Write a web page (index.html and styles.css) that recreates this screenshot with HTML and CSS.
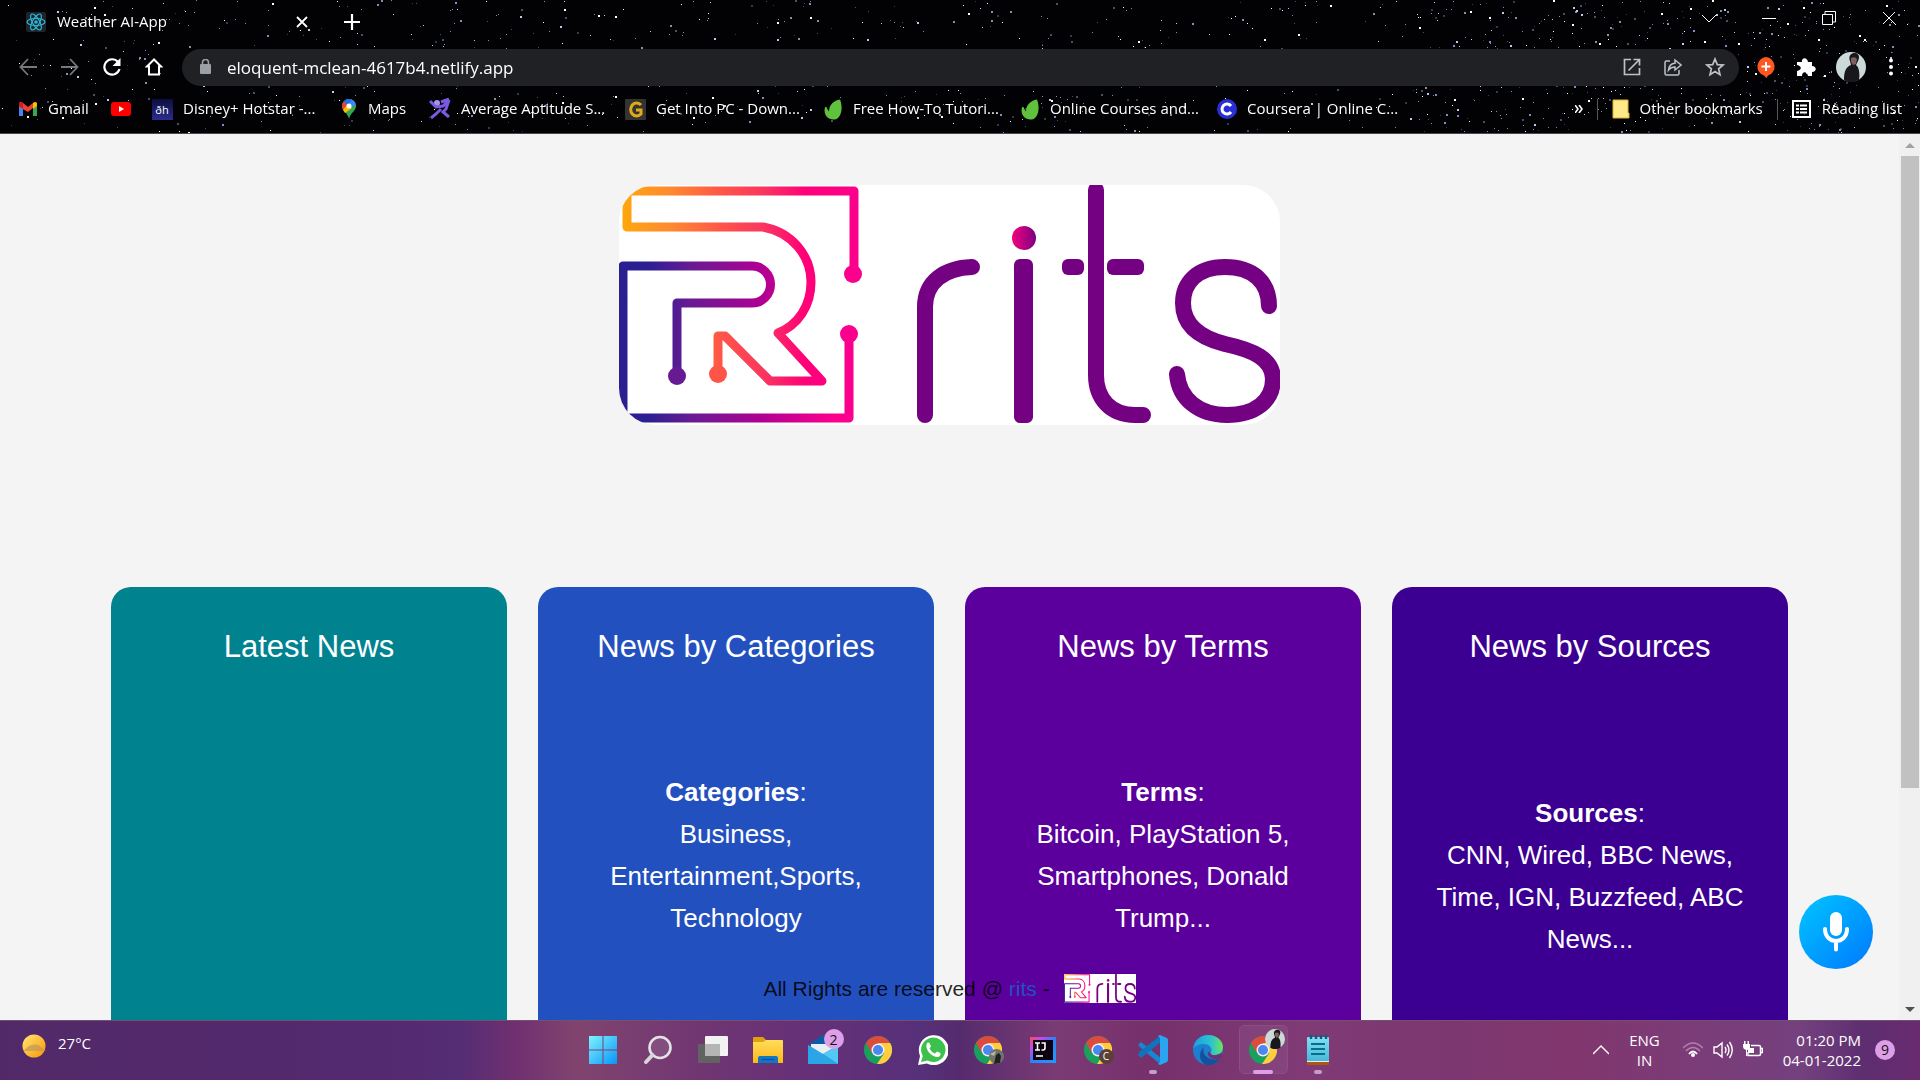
FILE: index.html
```
<!DOCTYPE html>
<html lang="en">
<head>
<meta charset="utf-8">
<title>Weather AI-App</title>
<link rel="stylesheet" href="styles.css">
</head>
<body>
<svg class="defs" width="0" height="0" aria-hidden="true">
  <defs>
    <linearGradient id="warm" gradientUnits="userSpaceOnUse" x1="4" y1="0" x2="238" y2="0">
      <stop offset="0" stop-color="#ffa60c"/><stop offset=".2" stop-color="#ff8a30"/><stop offset=".42" stop-color="#ff5548"/><stop offset=".6" stop-color="#f9365f"/><stop offset=".78" stop-color="#ff0078"/><stop offset="1" stop-color="#fb008c"/>
    </linearGradient>
    <linearGradient id="cool" gradientUnits="userSpaceOnUse" x1="0" y1="0" x2="238" y2="0">
      <stop offset="0" stop-color="#2a2090"/><stop offset=".12" stop-color="#2b1f92"/><stop offset=".3" stop-color="#671b93"/><stop offset=".6" stop-color="#b00093"/><stop offset=".9" stop-color="#fb008c"/>
    </linearGradient>
    <linearGradient id="dot"><stop offset="0" stop-color="#f5007e"/><stop offset="1" stop-color="#7a0082"/></linearGradient>
    <linearGradient id="win" x1="0" y1="0" x2="1" y2="1"><stop offset="0" stop-color="#7df3ff"/><stop offset="1" stop-color="#0a94f8"/></linearGradient>
    <linearGradient id="sun" x1="0" y1="0" x2="1" y2="1"><stop offset="0" stop-color="#ffe978"/><stop offset="1" stop-color="#fb9400"/></linearGradient>
    <linearGradient id="folder" x1="0" y1="0" x2="0" y2="1"><stop offset="0" stop-color="#ffdc5c"/><stop offset="1" stop-color="#fcb915"/></linearGradient>
    <linearGradient id="edge" x1="0" y1="0" x2="1" y2="0"><stop offset="0" stop-color="#1b9de2"/><stop offset=".6" stop-color="#2cc3d0"/><stop offset="1" stop-color="#6be45a"/></linearGradient>
    <linearGradient id="ij" x1="0" y1="0" x2="1" y2="1"><stop offset="0" stop-color="#fd4a5c"/><stop offset=".25" stop-color="#c04af0"/><stop offset=".5" stop-color="#2f80f5"/><stop offset="1" stop-color="#1f9bff"/></linearGradient>
    <linearGradient id="pad" x1="0" y1="0" x2="0" y2="1"><stop offset="0" stop-color="#83e0f5"/><stop offset="1" stop-color="#44b9da"/></linearGradient>
    <linearGradient id="hot" x1="0" y1="0" x2="0" y2="1"><stop offset="0" stop-color="#0b0f3c"/><stop offset="1" stop-color="#2c2d8e"/></linearGradient>
    <symbol id="rits" viewBox="0 0 661 240">
      <g fill="none" stroke="url(#warm)" stroke-width="9" stroke-linejoin="round">
        <path d="M235 89V6H8V42H144C172 47 192 70 192 97C192 121 179 140 159 148L203 196H151L106 151H99V189"/>
      </g>
      <g fill="none" stroke="url(#cool)" stroke-width="9" stroke-linejoin="round">
        <path d="M58 191V118H133A18 18 0 0 0 133 81H4V233H230V149"/>
      </g>
      <circle cx="234" cy="89" r="9" fill="#fb008c"/><circle cx="230" cy="149" r="9" fill="#fb008c"/>
      <circle cx="58" cy="191" r="9" fill="#671b93"/><circle cx="99" cy="189" r="9" fill="#ff5548"/>
      <g fill="none" stroke="#740082" stroke-width="16" stroke-linecap="round">
        <path d="M306 230V122C306 97 325 83 353 82"/>
        <path d="M477 5V190C477 214 492 230 516 230H524"/>
        <path d="M650 121C650 97 634 82 606 82C578 82 564 98 564 118C564 141 582 153 606 159C634 165 654 174 654 194C654 216 636 230 608 230C580 230 560 214 558 189"/>
      </g>
      <g fill="#740082"><rect x="395" y="74" width="19" height="164" rx="6"/><rect x="443" y="74" width="22" height="16" rx="6"/><rect x="488" y="74" width="37" height="16" rx="6"/></g>
      <circle cx="405" cy="53" r="12" fill="url(#dot)"/>
    </symbol>
    <symbol id="chrome" viewBox="0 0 28 28">
      <circle cx="14" cy="14" r="14" fill="#17a05e"/>
      <path d="M1.900 7A14 14 0 0 1 26.100 7H14L8 17.500Z" fill="#dd4b3e"/>
      <path d="M14 7H26.100A14 14 0 0 1 13 28L20 17.500Z" fill="#ffcd40"/>
      <circle cx="14" cy="14" r="6.500" fill="#f1f1f1"/><circle cx="14" cy="14" r="5" fill="#4a87f0"/>
    </symbol>
    <symbol id="person" viewBox="0 0 30 30">
      <circle cx="15" cy="15" r="15" fill="#cbd9d9"/>
      <path d="M8 28C8 19 10 15 15 13L14 9C12 4 15 1 19 1C23 1 24 5 22 9L20 13C23 15 24 21 23 28C18 31 12 31 8 28Z" fill="#17171c"/>
      <path d="M15 6Q19 4 21 7L20 12L17 13L15 10Z" fill="#80605a"/>
    </symbol>
    <symbol id="leaf" viewBox="0 0 20 20"><path d="M17 0C20 7 19 18 12 20C5 21 0 15 2 8C3 7 4 8 4 9L6 12C6 5 11 1 17 0Z" fill="#5fc13c"/></symbol>
  </defs>
</svg>

<header class="browser">
  <canvas class="stars" id="stars"></canvas>
  <div class="tabs">
    <div class="tab">
      <svg width="20" height="20" viewBox="0 0 20 20"><rect width="20" height="20" rx="2" fill="#20232a"/><g fill="none" stroke="#2ab8d8" stroke-width="1.200"><ellipse cx="10" cy="10" rx="9" ry="3.500"/><ellipse cx="10" cy="10" rx="9" ry="3.500" transform="rotate(60 10 10)"/><ellipse cx="10" cy="10" rx="9" ry="3.500" transform="rotate(120 10 10)"/></g><circle cx="10" cy="10" r="1.800" fill="#2ab8d8"/></svg>
      <span class="tab-title">Weather AI-App</span>
      <button class="icon-btn" aria-label="Close tab"><svg width="12" height="12" viewBox="0 0 12 12"><path d="M1 1L11 11M11 1L1 11" stroke="#fff" stroke-width="1.800"/></svg></button>
    </div>
    <button class="icon-btn" aria-label="New tab"><svg width="16" height="16" viewBox="0 0 16 16"><path d="M8 0V16M0 8H16" stroke="#fff" stroke-width="2.200"/></svg></button>
    <div class="window-controls">
      <button class="icon-btn" aria-label="Search tabs"><svg width="14" height="14" viewBox="0 0 14 14"><path d="M0 4L7 11L14 4" fill="none" stroke="#fff"/></svg></button>
      <button class="icon-btn" aria-label="Minimize"><svg width="14" height="14" viewBox="0 0 14 14"><path d="M0 7.500H14" stroke="#fff"/></svg></button>
      <button class="icon-btn" aria-label="Restore"><svg width="14" height="14" viewBox="0 0 14 14"><path d="M.500 3.500H10.500V13.500H.500ZM3 3V.500H13.500V11H11" fill="none" stroke="#fff"/></svg></button>
      <button class="icon-btn" aria-label="Close"><svg width="14" height="14" viewBox="0 0 14 14"><path d="M1 1L13 13M13 1L1 13" stroke="#fff"/></svg></button>
    </div>
  </div>
  <div class="toolbar">
    <div class="nav">
      <button class="icon-btn" aria-label="Back"><svg width="18" height="18" viewBox="0 0 18 18"><path d="M18 9H2M9 1L1.500 9L9 17" fill="none" stroke="#77787a" stroke-width="1.800"/></svg></button>
      <button class="icon-btn" aria-label="Forward"><svg width="18" height="18" viewBox="0 0 18 18"><path d="M0 9H16M9 1L16.500 9L9 17" fill="none" stroke="#77787a" stroke-width="1.800"/></svg></button>
      <button class="icon-btn" aria-label="Reload"><svg width="18" height="18" viewBox="0 0 18 18"><path d="M15 4A7.700 7.700 0 1 0 16.500 11" fill="none" stroke="#fff" stroke-width="2.200"/><path d="M17.500 0V8H9.500Z" fill="#fff"/></svg></button>
      <button class="icon-btn" aria-label="Home"><svg width="18" height="18" viewBox="0 0 18 18"><path d="M9 1.500L2 8.500H4V16.500H14V8.500H16Z" fill="none" stroke="#fff" stroke-width="2"/></svg></button>
    </div>
    <div class="omnibox">
      <svg width="11" height="16" viewBox="0 0 11 16"><rect y="5" width="11" height="10" rx="1" fill="#9aa0a6"/><path d="M2.500 6V3.500A3 3 0 0 1 8.500 3.500V6" fill="none" stroke="#9aa0a6" stroke-width="1.600"/></svg>
      <input class="url" type="text" aria-label="Address" value="eloquent-mclean-4617b4.netlify.app">
      <div class="page-actions">
        <button class="icon-btn" aria-label="Open in new window"><svg width="18" height="18" viewBox="0 0 18 18"><path d="M8 1.500H1.500V16.500H16.500V10M10.500 1.500H16.500V7.500M16 2L5.500 12.500" fill="none" stroke="#bdc1c6" stroke-width="1.700"/></svg></button>
        <button class="icon-btn" aria-label="Share"><svg width="18" height="18" viewBox="0 0 18 18"><path d="M6 3H2.500Q1 3 1 4.500V15.500Q1 17 2.500 17H13.500Q15 17 15 15.500V12M4.500 12C5 8 7.500 5.500 11 5.300V2L17 7L11 12V9C8 9 6 10 4.500 12Z" fill="none" stroke="#bdc1c6" stroke-width="1.500"/></svg></button>
        <button class="icon-btn" aria-label="Bookmark"><svg width="20" height="20" viewBox="0 0 20 20"><path d="M10 2L12.300 7.600L18 8L13.600 11.800L15 17.600L10 14.500L5 17.600L6.400 11.800L2 8L7.700 7.600Z" fill="none" stroke="#bdc1c6" stroke-width="1.700"/></svg></button>
      </div>
    </div>
    <div class="extensions">
      <button class="icon-btn" aria-label="Extension"><svg width="20" height="22" viewBox="0 0 20 22"><path d="M10 1A9.500 9.500 0 0 1 12 19.500L10.500 22L8 19.500A9.500 9.500 0 0 1 10 1Z" fill="#ff5722"/><path d="M10 6V15M5.500 10.500H14.500" stroke="#fff" stroke-width="2"/></svg></button>
      <button class="icon-btn" aria-label="Extensions"><svg width="20" height="20" viewBox="0 0 20 20"><path d="M1 5H6C5 1 11 -1 12 5H16V9C21 9 21 15 16 15V19H12C11 14 6 14 6 19H1V14C6 13 6 9 1 8Z" fill="#fff"/></svg></button>
      <button class="icon-btn" aria-label="Profile"><svg width="30" height="30"><use href="#person"/></svg></button>
      <button class="icon-btn menu" aria-label="Menu"><svg width="4" height="18" viewBox="0 0 4 18"><g fill="#fff"><circle cx="2" cy="2.500" r="2"/><circle cx="2" cy="9" r="2"/><circle cx="2" cy="15.500" r="2"/></g></svg></button>
    </div>
  </div>
  <nav class="bookmarks">
    <div class="bookmark-list">
      <a href="#"><svg width="20" height="20" viewBox="0 0 20 20"><path d="M1 5V17H5V8Z" fill="#4285f4"/><path d="M19 5V17H15V8Z" fill="#34a853"/><path d="M1 8V4Q3 2 5 4L10 8L15 4V9L10 13Z" fill="#ea4335"/><path d="M15 4Q17 2 19 4V7L15 10Z" fill="#fbbc04"/><path d="M1 4Q3 2 5 4V10L1 7Z" fill="#c5221f"/></svg><span>Gmail</span></a>
      <a href="#" aria-label="YouTube"><svg width="20" height="20" viewBox="0 0 20 20"><rect y="3" width="20" height="14" rx="3" fill="#f00"/><path d="M8 7V13L13 10Z" fill="#fff"/></svg></a>
      <a href="#"><svg width="21" height="21" viewBox="0 0 21 21"><rect width="21" height="21" fill="url(#hot)"/><text x="10" y="15" font-size="11" text-anchor="middle" fill="#fff">ðh</text></svg><span>Disney+ Hotstar -...</span></a>
      <a href="#"><svg width="18" height="20" viewBox="0 0 18 20"><path d="M9 20C8 14 2 12 2 7A7 7 0 0 1 16 7C16 12 10 14 9 20Z" fill="#34a853"/><path d="M9 0A7 7 0 0 1 16 7L9 7Z" fill="#4285f4"/><path d="M3.500 2.500A7 7 0 0 1 12 .700L6 8Z" fill="#1a73e8"/><path d="M3.500 2.500L8 6L3 11Q1 6 3.500 2.500Z" fill="#ea4335"/><path d="M3 11L8 5L12 9L5 14Z" fill="#fbbc04"/><circle cx="9" cy="7" r="2.500" fill="#fff"/></svg><span>Maps</span></a>
      <a href="#"><svg width="22" height="22" viewBox="0 0 22 22"><circle cx="8" cy="5" r="3" fill="#a993e8"/><path d="M1 3L7 9L14 8L20 2L17 11L14 14L20 19M12 11L7 16L2 20M12 4L20 1" fill="none" stroke="#7a5be0" stroke-width="3"/></svg><span>Average Aptitude S...</span></a>
      <a href="#"><svg width="21" height="21" viewBox="0 0 21 21"><rect width="21" height="21" rx="1" fill="#333"/><path d="M16 6A6 6.500 0 1 0 16 15V11H11" fill="none" stroke="#e0aa18" stroke-width="3"/></svg><span>Get Into PC - Down...</span></a>
      <a href="#"><svg width="20" height="21"><use href="#leaf"/></svg><span>Free How-To Tutori...</span></a>
      <a href="#"><svg width="20" height="21"><use href="#leaf"/></svg><span>Online Courses and...</span></a>
      <a href="#"><svg width="20" height="20" viewBox="0 0 20 20"><circle cx="10" cy="10" r="10" fill="#2a2ed8"/><path d="M14 7A5 5 0 1 0 14 13" fill="none" stroke="#fff" stroke-width="3"/></svg><span>Coursera | Online C...</span></a>
    </div>
    <div class="bookmark-end">
      <button class="icon-btn" aria-label="More bookmarks"><svg width="8" height="8" viewBox="0 0 8 8"><path d="M0 0L3 4L0 8M4 0L7 4L4 8" fill="none" stroke="#fff" stroke-width="1.600"/></svg></button>
      <a class="divided" href="#"><svg width="18" height="20" viewBox="0 0 18 20"><path d="M1 1H16V14H17V19H1Z" fill="#ffe98a" stroke="#d9b52c"/></svg><span>Other bookmarks</span></a>
      <a class="divided" href="#"><svg width="20" height="20" viewBox="0 0 20 20"><rect x="1" y="2" width="17" height="16" fill="none" stroke="#fff" stroke-width="2"/><path d="M4 6.500H7M8 6.500H15M4 10H7M8 10H15M4 13.500H7M8 13.500H15" stroke="#fff" stroke-width="1.800"/></svg><span>Reading list</span></a>
    </div>
  </nav>
</header>

<div class="viewport">
  <main class="page">
    <div class="logo"><svg role="img" aria-label="rits" viewBox="0 0 661 240"><use href="#rits"/></svg></div>
    <section class="cards">
      <article class="card teal"><h2>Latest News</h2></article>
      <article class="card blue"><h2>News by Categories</h2><p><strong>Categories</strong>:<br>Business, Entertainment,Sports, Technology</p></article>
      <article class="card purple"><h2>News by Terms</h2><p><strong>Terms</strong>:<br>Bitcoin, PlayStation 5, Smartphones, Donald Trump...</p></article>
      <article class="card indigo"><h2>News by Sources</h2><p class="low"><strong>Sources</strong>:<br>CNN, Wired, BBC News, Time, IGN, Buzzfeed, ABC News...</p></article>
    </section>
    <footer class="rights"><span>All Rights are reserved @ <a href="#">rits</a> -</span><svg width="72" height="29" viewBox="0 0 661 240" preserveAspectRatio="none"><rect width="661" height="240" fill="#fff"/><use href="#rits"/></svg></footer>
    <button class="mic" aria-label="Speak"><svg width="26" height="40" viewBox="0 0 26 40"><rect x="7" width="12" height="24" rx="6" fill="#fff"/><path d="M2 17C2 33 24 33 24 17M13 29V37.500" fill="none" stroke="#fff" stroke-width="4" stroke-linecap="round"/></svg></button>
  </main>
  <div class="scrollbar">
    <svg width="21" height="22" viewBox="0 0 21 22"><path d="M6 14L11 9L16 14Z" fill="#a3a3a3"/></svg>
    <div class="track"><div class="thumb"></div></div>
    <svg width="21" height="22" viewBox="0 0 21 22"><path d="M6 9L11 14L16 9Z" fill="#505050"/></svg>
  </div>
</div>

<footer class="taskbar">
  <div class="weather"><svg width="24" height="24" viewBox="0 0 24 24"><circle cx="12" cy="12" r="11.500" fill="url(#sun)"/><path d="M2 17Q5 12 10 11Q16 9 20 14L24 17H1Z" fill="#bd9860" opacity=".7"/></svg><span>27°C</span></div>
  <div class="apps">
    <button class="app" aria-label="Start"><svg width="30" height="30" viewBox="0 0 30 30"><path d="M1 1H14.500V14.500H1ZM15.500 1H29V14.500H15.500ZM1 15.500H14.500V29H1ZM15.500 15.500H29V29H15.500Z" fill="url(#win)"/></svg></button>
    <button class="app" aria-label="Search"><svg width="30" height="30" viewBox="0 0 30 30"><circle cx="17" cy="12.500" r="10.500" fill="#fff" fill-opacity=".1" stroke="#e3e3e6" stroke-width="2.600"/><path d="M9.500 20L3 27" stroke="#d5d6da" stroke-width="4" stroke-linecap="round"/></svg></button>
    <button class="app" aria-label="Task view"><svg width="30" height="30" viewBox="0 0 30 30"><rect x="0" y="9" width="22" height="19" rx="1" fill="#626262"/><rect x="7" y="1" width="23" height="20" rx="1" fill="#f2f2f2"/><path d="M7 9H22V21H8Q7 21 7 20Z" fill="#b5b5b5"/></svg></button>
    <button class="app" aria-label="Files"><svg width="30" height="30" viewBox="0 0 30 30"><path d="M0 3Q0 2 1 2H10L13 5V9H0Z" fill="#e0a10a"/><path d="M0 7H10L13 5H29Q30 5 30 6V28H0Z" fill="url(#folder)"/><path d="M5 28V23Q5 21 7 21H23Q25 21 25 23V28Z" fill="#1075c4"/><path d="M9 24.500H21" stroke="#0a4a85"/></svg></button>
    <button class="app" aria-label="Mail"><svg width="36" height="36" viewBox="0 0 36 36"><path d="M3 13L18 3L33 13Z" fill="#0b5ca8"/><path d="M6 12H30V20L18 25L6 20Z" fill="#e9eef2"/><path d="M3 13L18 22L33 13V32H3Z" fill="#29abe9"/><path d="M18 22L33 32H3Z" fill="#1790d8"/><path d="M18 22L33 13V32Z" fill="#53c8f4"/><path d="M3 13L33 32H3Z" fill="#2ba5e5"/></svg><span class="count">2</span></button>
    <button class="app" aria-label="Chrome"><svg width="28" height="28"><use href="#chrome"/></svg></button>
    <button class="app" aria-label="WhatsApp"><svg width="30" height="30" viewBox="0 0 30 30"><path d="M0 30L2 21A15 15 0 1 1 9 28.500Z" fill="#fff"/><path d="M3 27L4.800 21A12.200 12.200 0 1 1 9.500 25.500Z" fill="#3cc24c"/><path d="M9 8Q10 7 11.500 8L13 11.500L11.500 13.500Q13 17 17 18.500L19 16.500L22.500 18Q23 21 20 22Q16 22.500 11.500 18Q7 13 9 8Z" fill="#fff"/></svg></button>
    <button class="app" aria-label="Chrome, first profile"><svg width="28" height="28"><use href="#chrome"/></svg><svg class="low-badge" width="15" height="15" viewBox="0 0 15 15"><circle cx="7.500" cy="7.500" r="7.500" fill="#71746c"/><path d="M5 15L7 6L10 4L12 7L11 14Z" fill="#20221f"/><path d="M1 5L7 2L5 7Z" fill="#b7b7a9"/></svg></button>
    <button class="app" aria-label="IntelliJ"><svg width="28" height="28" viewBox="0 0 28 28"><rect x="1" y="1" width="26" height="26" fill="url(#ij)"/><rect x="4" y="4" width="20" height="20" fill="#0c0210"/><path d="M6 7H11M8.500 7V14M6 14H11M12.500 7H16V12Q16 14 14 14H12.500M7 20H14" fill="none" stroke="#fff" stroke-width="1.600"/></svg></button>
    <button class="app" aria-label="Chrome, profile C"><svg width="28" height="28"><use href="#chrome"/></svg><span class="low-badge letter">C</span></button>
    <button class="app running" aria-label="VS Code"><svg width="30" height="30" viewBox="0 0 30 30"><path d="M0 10L3 7L23 23V30L3 13Z" fill="#1687d0"/><path d="M0 20L3 23L23 7V0L1 17Z" fill="#0f73bd"/><path d="M22 0L29 3Q30 4 30 5V25Q30 26 29 27L22 30L20 29L22 27V3L20 1Z" fill="#2aa6f0"/></svg></button>
    <button class="app" aria-label="Edge"><svg width="30" height="30" viewBox="0 0 30 30"><circle cx="15" cy="15" r="15" fill="#1c7fd0"/><path d="M0 14C1 5 8 0 15 0C24 0 30 6 30 12C30 18 25 20 21 20C18 20 17 18 18 17C20 14 17 9 11 9C6 9 2 11 0 14Z" fill="url(#edge)"/><path d="M11 12C8 20 15 26 27 24C23 29 18 31 13 30C6 27 5 17 11 12Z" fill="#14509b"/><path d="M17 17C17 20 21 22 29 18L30 21L27 24Q17 25 15 20Q14 16 17 17Z" fill="#71316f"/></svg></button>
    <button class="app active" aria-label="Chrome, current window"><svg width="28" height="28"><use href="#chrome"/></svg><svg class="high-badge" width="20" height="20"><use href="#person"/></svg></button>
    <button class="app running" aria-label="Notepad"><svg width="24" height="30" viewBox="0 0 24 30"><path d="M1 26H23V29Q23 30 22 30H2Q1 30 1 29Z" fill="#a9590f"/><path d="M1 25H23V27H1Z" fill="#eee"/><rect x="1" y="2" width="22" height="24" rx="1" fill="url(#pad)"/><path d="M5 0V4M10 0V4M15 0V4M20 0V4" stroke="#0b5e7c" stroke-width="2.400"/><path d="M5 9H19M5 14H19M5 19H19" stroke="#0b6d8c" stroke-width="2"/></svg></button>
  </div>
  <div class="tray">
    <svg width="16" height="10" viewBox="0 0 16 10"><path d="M0 9L8 1L16 9" fill="none" stroke="#fff" stroke-width="1.400"/></svg>
    <span class="lang">ENG<br>IN</span>
    <div class="status">
      <svg width="20" height="16" viewBox="0 0 20 16"><path d="M0 6Q10 -4 20 6M3 9Q10 2 17 9" fill="none" stroke="#b77fae" stroke-width="1.500"/><path d="M6 12Q10 7 14 12" fill="none" stroke="#fff" stroke-width="1.800"/><circle cx="10" cy="13" r="2" fill="#fff"/></svg>
      <svg width="20" height="18" viewBox="0 0 20 18"><path d="M1 6H4L9 2V16L4 12H1ZM12 6Q14 9 12 12M14 3.500Q18 9 14 14.500M16.500 1Q22 9 16.500 17" fill="none" stroke="#fff" stroke-width="1.400"/></svg>
      <svg width="20" height="18" viewBox="0 0 20 18"><path d="M8 4.500H16Q17.500 4.500 17.500 6V13Q17.500 14.500 16 14.500H5V11M18 7.500H19.500V11.500H18" fill="none" stroke="#fff" stroke-width="1.500"/><path d="M7 7H11V12H5V9ZM0 3H7V7Q6 9 4 9V15H3V9Q0 8 0 6ZM1 0H2.500V3H1ZM4.500 0H6V3H4.500Z" fill="#fff"/></svg>
    </div>
    <span class="clock">01:20 PM<br>04-01-2022</span>
    <span class="notices">9</span>
  </div>
</footer>
<script src="stars.js"></script>
</body>
</html>
```
FILE: styles.css
```
* { box-sizing: border-box; }
body {
  margin: 0;
  height: 100vh;
  display: flex;
  flex-direction: column;
  overflow: hidden;
  font-family: "Open Sans", "Noto Sans", sans-serif;
  font-size: 15px;
}
svg { display: block; flex: none; }
.defs { position: absolute; }
a { color: inherit; text-decoration: none; }
button { font: inherit; color: inherit; border: 0; padding: 0; background: none; }
.icon-btn { display: flex; align-items: center; justify-content: center; }

/* Browser frame */
.browser {
  position: relative;
  background: #020204;
  color: #fff;
  padding-bottom: 5px;
  border-bottom: 1px solid #4a4a4d;
}
.stars { position: absolute; inset: 0; width: 100%; height: 100%; }
.tabs, .toolbar, .bookmarks { position: relative; display: flex; align-items: center; }
.tabs { height: 44px; padding: 0 24px 0 26px; gap: 36px; }
.tab { display: flex; align-items: center; gap: 11px; width: 282px; }
.tab-title { flex: 1; padding-bottom: 2px; }
.window-controls { margin-left: auto; display: flex; gap: 46px; padding-bottom: 8px; }
.toolbar { height: 46px; padding: 0 27px 0 19px; }
.nav { display: flex; gap: 24px; margin-right: 19px; }
.omnibox {
  flex: 1;
  height: 37px;
  display: flex;
  align-items: center;
  gap: 16px;
  padding: 0 14px 0 18px;
  border-radius: 19px;
  background: #202124;
}
.url {
  flex: 1;
  border: 0;
  padding: 0;
  background: none;
  color: #fff;
  font: 17px "Open Sans", "Noto Sans", sans-serif;
}
.page-actions { display: flex; align-items: center; gap: 23px; }
.extensions { display: flex; align-items: center; gap: 20px; margin-left: 17px; }
.menu { margin-left: 3px; }
.bookmarks { height: 38px; padding: 0 18px; justify-content: space-between; }
.bookmark-list { display: grid; grid-template-columns: 93px 41px 188px 89px 196px 198px 197px 197px auto; }
.bookmarks a { display: flex; align-items: center; gap: 10px; white-space: nowrap; }
.bookmarks a span { padding-bottom: 2px; }
.bookmark-end { display: flex; align-items: center; gap: 14px; }
.bookmark-end .divided { height: 21px; padding-left: 14px; border-left: 1px solid #55565a; }

/* Web page */
.viewport { flex: 1; min-height: 0; display: flex; background: #f4f4f4; font-family: "Liberation Sans", Arial, sans-serif; }
.page { position: relative; flex: 1; overflow: hidden; padding-top: 51px; }
.logo {
  width: 35%;
  min-width: 320px;
  max-width: 661px;
  margin: 0 auto 162px;
  border-radius: 37px;
  overflow: hidden;
  background: #fff;
}
.cards { display: grid; grid-template-columns: repeat(4, 1fr); gap: 31px; padding: 0 111px; }
.card { min-height: 540px; padding: 40px; border-radius: 20px; color: #fff; text-align: center; }
.card h2 { margin: 0; font-size: 31px; line-height: 40px; font-weight: 400; white-space: nowrap; }
.card p { margin: 104px 0 0; font-size: 26px; line-height: 42px; }
.card .low { margin-top: 125px; }
.teal { background: #00838f; }
.blue { background: #2350bf; }
.purple { background: #5b009d; }
.indigo { background: #3b0091; }
.rights {
  position: absolute;
  left: 0;
  right: 0;
  bottom: 17px;
  display: flex;
  align-items: center;
  justify-content: center;
  gap: 14px;
  color: rgba(0, 0, 0, 0.87);
  font-size: 21px;
}
.rights a { color: #2350bf; }
.mic {
  position: absolute;
  right: 26px;
  bottom: 51px;
  width: 74px;
  height: 74px;
  display: grid;
  place-items: center;
  border-radius: 50%;
  background: linear-gradient(135deg, #00c6ff, #0078ff);
}
.scrollbar { width: 21px; display: flex; flex-direction: column; background: #f0f0f0; }
.track { flex: 1; padding: 0 1px 0 2px; }
.thumb { height: 75%; background: #c1c1c1; }

/* Taskbar */
.taskbar {
  height: 60px;
  display: grid;
  grid-template-columns: 1fr auto 1fr;
  border-top: 1px solid #72506f;
  color: #fff;
  background: linear-gradient(90deg, #522968 0%, #53296f 18%, #552d74 24%, #713070 27%, #81446f 30%, #713772 36%, #663078 42%, #563079 48%, #552b6e 50%, #7b3b74 55%, #76306c 60%, #803a75 68%, #7c3770 75%, #81366d 82%, #7a3d79 89%, #73407e 94%, #5d2e70 97%, #682b6e 100%);
}
.weather { display: flex; align-items: center; gap: 12px; padding: 0 0 10px 22px; }
.weather span { padding-bottom: 6px; }
.apps { display: grid; grid-template-columns: repeat(14, 55px); padding: 0 0 2px 1px; }
.app { position: relative; display: grid; place-items: center; }
.count, .notices { display: grid; place-items: center; width: 20px; height: 20px; border-radius: 50%; background: #dda0e8; color: #161016; font-size: 14px; }
.count { position: absolute; right: 7px; top: 8px; }
.low-badge { position: absolute; right: 12px; bottom: 14px; }
.letter { width: 15px; height: 15px; border-radius: 50%; background: #5a4038; font-size: 10px; line-height: 15px; }
.high-badge { position: absolute; right: 6px; top: 8px; }
.running::after, .active::after { content: ""; position: absolute; bottom: 4px; width: 8px; height: 4px; border-radius: 2px; background: #c3a0bf; }
.active::after { width: 20px; background: #dda0e8; }
.active::before { content: ""; position: absolute; inset: 4px 3px; border: 1px solid #8c4d82; border-radius: 5px; background: rgba(255, 255, 255, 0.06); }
.active svg { position: relative; }
.active .high-badge { position: absolute; }
.tray { display: flex; align-items: center; justify-content: flex-end; gap: 20px; padding: 0 25px 2px 0; }
.lang { text-align: center; line-height: 20px; }
.status { display: flex; align-items: center; gap: 10px; margin-left: 3px; }
.clock { text-align: right; line-height: 20px; }
.notices { margin-left: -6px; }
```
FILE: stars.js
```
// Paints the starfield of the browser theme, denser toward the right edge.
const canvas = document.getElementById("stars");
canvas.width = canvas.clientWidth;
canvas.height = canvas.clientHeight;
const ctx = canvas.getContext("2d");
let seed = 41;
function random() {
  seed = (seed * 16807) % 2147483647;
  return seed / 2147483647;
}
const colors = ["#ffffff", "#b9cdf2", "#7890c8", "#45506e", "#303a55", "#8b8fa8"];
for (let i = 0; i < 2600; i++) {
  const x = random();
  const y = random();
  const keep = x > 0.72 ? 0.9 : 0.38;
  if (random() > keep) continue;
  ctx.fillStyle = colors[Math.floor(random() * colors.length)];
  const size = random() > 0.75 ? 2 : 1;
  ctx.fillRect(Math.floor(x * canvas.width), Math.floor(y * canvas.height), size, size);
}
```
